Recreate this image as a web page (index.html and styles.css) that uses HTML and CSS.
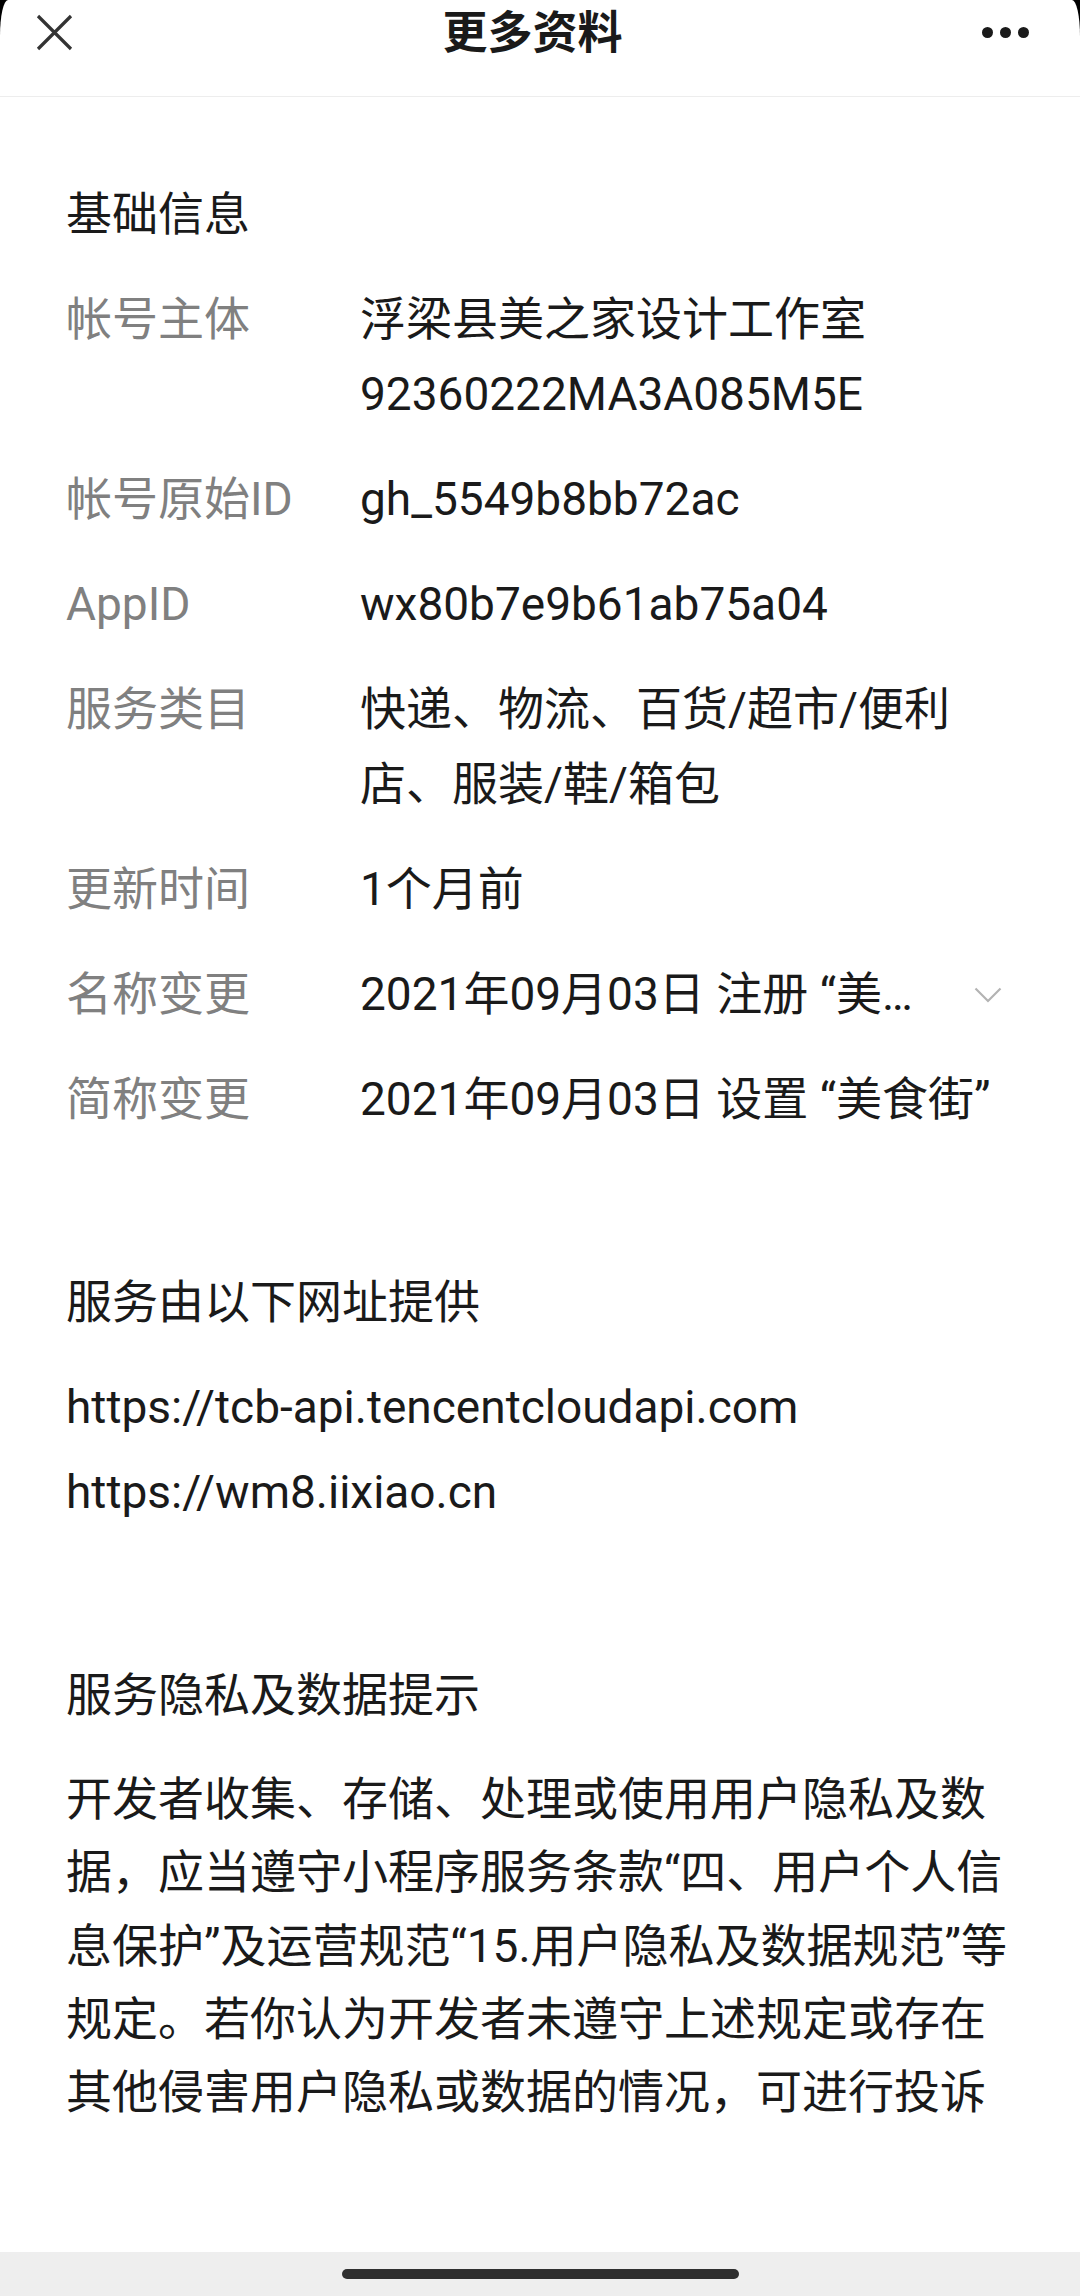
FILE: index.html
```html
<!DOCTYPE html>
<html lang="zh-CN">
<head>
<meta charset="UTF-8">
<meta name="viewport" content="width=device-width, initial-scale=1.0">
<title>更多资料</title>
<link rel="stylesheet" href="styles.css">
</head>
<body>

<div class="sheet">

<!-- Header -->
<header class="nav">
    <span class="nav-close">
        <svg width="37" height="37" viewBox="0 0 37 37"><path d="M2 2 L35 35 M35 2 L2 35" stroke="#333" stroke-width="3.2" fill="none"/></svg>
    </span>
    <h1 class="nav-title">更多资料</h1>
    <span class="nav-more">
        <i></i><i></i><i></i>
    </span>
</header>

<!-- Main Content -->
<main class="content">
    <section class="section">
        <h2 class="section-title">基础信息</h2>
        <ul class="info-list">
            <li class="info-row">
                <span class="label">帐号主体</span>
                <div class="value">
                    <div>浮梁县美之家设计工作室</div>
                    <div>92360222MA3A085M5E</div>
                </div>
            </li>
            <li class="info-row">
                <span class="label">帐号原始ID</span>
                <div class="value">gh_5549b8bb72ac</div>
            </li>
            <li class="info-row">
                <span class="label">AppID</span>
                <div class="value">wx80b7e9b61ab75a04</div>
            </li>
            <li class="info-row">
                <span class="label">服务类目</span>
                <div class="value">快递、物流、百货/超市/便利店、服装/鞋/箱包</div>
            </li>
            <li class="info-row">
                <span class="label">更新时间</span>
                <div class="value">1个月前</div>
            </li>
            <li class="info-row">
                <span class="label">名称变更</span>
                <div class="value value-fold">
                    <span class="fold-text">2021年09月03日 注册 “美食街”</span>
                    <svg class="chevron" width="28" height="16" viewBox="0 0 28 16"><path d="M1.5 1.5 L14 14 L26.5 1.5" stroke="#b3b3b3" stroke-width="2.2" fill="none"/></svg>
                </div>
            </li>
            <li class="info-row">
                <span class="label">简称变更</span>
                <div class="value">2021年09月03日 设置 “美食街”</div>
            </li>
        </ul>
    </section>

    <section class="section">
        <h2 class="section-title">服务由以下网址提供</h2>
        <ul class="url-list">
            <li>https://tcb-api.tencentcloudapi.com</li>
            <li>https://wm8.iixiao.cn</li>
        </ul>
    </section>

    <section class="section">
        <h2 class="section-title">服务隐私及数据提示</h2>
        <p class="notice">开发者收集、存储、处理或使用用户隐私及数据，应当遵守小程序服务条款“四、用户个人信息保护”及运营规范“15.用户隐私及数据规范”等规定。若你认为开发者未遵守上述规定或存在其他侵害用户隐私或数据的情况，可进行投诉</p>
    </section>
</main>

<!-- Gesture bar -->
<footer class="home-bar">
    <span class="home-pill"></span>
</footer>

</div>

</body>
</html>
```

FILE: styles.css
```css
html, body {
    margin: 0;
    padding: 0;
    background: #000;
}

body {
    font-family: Roboto, 'Noto Sans CJK SC', sans-serif;
    color: #1a1a1a;
}

.sheet {
    display: flex;
    flex-direction: column;
    min-height: 2296px;
    background: #fff;
    border-top-left-radius: 8px 36px;
    border-top-right-radius: 8px 36px;
}

/* Header */
.nav {
    display: grid;
    grid-template-columns: 1fr auto 1fr;
    align-items: center;
    height: 60px;
    padding: 0 51px 36px 36px;
    border-bottom: 1px solid #ededed;
}

.nav-close {
    display: flex;
    align-items: center;
}

.nav-title {
    margin: 4px 0 0;
    font-size: 45px;
    font-weight: 600;
    line-height: 60px;
    color: #1a1a1a;
}

.nav-more {
    display: flex;
    justify-content: flex-end;
    gap: 7px;
}

.nav-more i {
    width: 11px;
    height: 11px;
    border-radius: 50%;
    background: #1a1a1a;
}

/* Main Content */
.content {
    flex: 1;
    padding: 80px 66px 0;
    font-size: 46px;
    line-height: 75px;
}

.section + .section {
    margin-top: 128px;
}

.section-title {
    margin: 0 0 30px;
    font-size: 46px;
    font-weight: 400;
    line-height: 75px;
}

.info-list,
.url-list {
    list-style: none;
    margin: 0;
    padding: 0;
    display: flex;
    flex-direction: column;
}

.info-list {
    gap: 30px;
}

.url-list {
    gap: 10px;
}

.info-row {
    display: flex;
}

.label {
    flex: 0 0 294px;
    color: #808080;
}

.value {
    width: 632px;
    word-break: break-all;
}

.value-fold {
    display: flex;
    align-items: center;
    flex: 1;
}

.fold-text {
    width: 570px;
    overflow: hidden;
    white-space: nowrap;
    text-overflow: ellipsis;
}

.chevron {
    margin-left: auto;
    margin-right: 12px;
}

.notice {
    margin: 0;
    line-height: 73.3px;
}

/* Gesture bar */
.home-bar {
    display: flex;
    justify-content: center;
    align-items: center;
    height: 44px;
    background: #eeeeee;
}

.home-pill {
    width: 397px;
    height: 10px;
    border-radius: 5px;
    background: #2f2f2f;
}
```
